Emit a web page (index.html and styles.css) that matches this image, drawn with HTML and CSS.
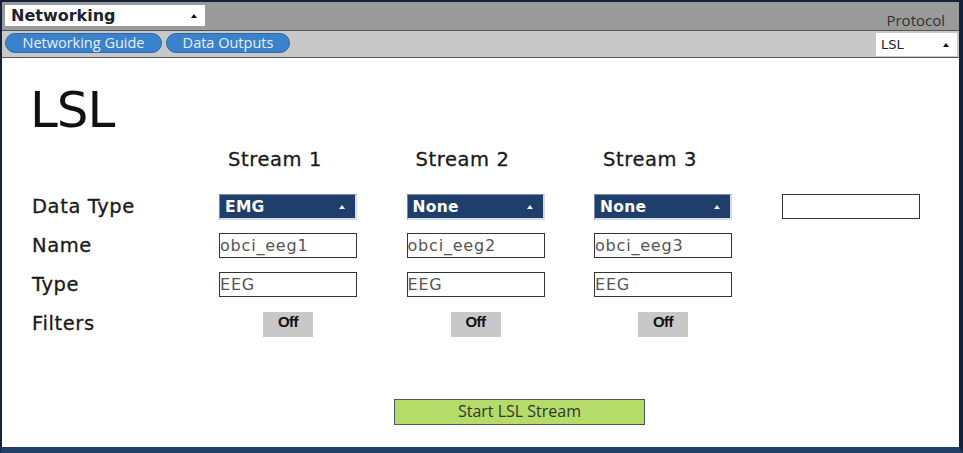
FILE: index.html
```html
<!DOCTYPE html>
<html>
<head>
<meta charset="utf-8">
<title>Networking - LSL</title>
<link rel="stylesheet" href="styles.css">
</head>
<body>
<div class="window">
	<div class="topbar">
		<div class="widget-select">
			<span>Networking</span>
			<span class="caret dark"></span>
		</div>
		<div class="protocol-label">Protocol</div>
	</div>
	<div class="tabbar">
		<div class="tabs">
			<span class="tab">Networking Guide</span>
			<span class="tab">Data Outputs</span>
		</div>
		<div class="protocol-select">
			<span>LSL</span>
			<span class="caret dark"></span>
		</div>
	</div>
	<main class="panel">
		<h1 class="title">LSL</h1>
		<div class="streams">
			<div></div>
			<div class="stream-head">Stream 1</div>
			<div class="stream-head">Stream 2</div>
			<div class="stream-head">Stream 3</div>
			<div></div>

			<div class="row-label">Data Type</div>
			<div class="dtype"><span>EMG</span><span class="caret"></span></div>
			<div class="dtype"><span>None</span><span class="caret"></span></div>
			<div class="dtype"><span>None</span><span class="caret"></span></div>
			<div class="field"></div>

			<div class="row-label">Name</div>
			<div class="field">obci_eeg1</div>
			<div class="field">obci_eeg2</div>
			<div class="field">obci_eeg3</div>
			<div></div>

			<div class="row-label">Type</div>
			<div class="field">EEG</div>
			<div class="field">EEG</div>
			<div class="field">EEG</div>
			<div></div>

			<div class="row-label">Filters</div>
			<div class="toggle-cell"><span class="toggle">Off</span></div>
			<div class="toggle-cell"><span class="toggle">Off</span></div>
			<div class="toggle-cell"><span class="toggle">Off</span></div>
			<div></div>
		</div>
		<div class="start-row">
			<span class="start-btn">Start LSL Stream</span>
		</div>
	</main>
</div>
</body>
</html>
```

FILE: styles.css
```css
html, body {
  margin: 0;
  padding: 0;
}

body {
  width: 963px;
  height: 453px;
  overflow: hidden;
  background: #1f3e68;
  font-family: "DejaVu Sans", sans-serif;
}

.window {
  height: 453px;
  box-sizing: border-box;
  display: flex;
  flex-direction: column;
  border: 2px solid #13223a;
  border-right-width: 4px;
  border-bottom: 6px solid #1f3e68;
  background: white;
}

/* || top bars */

.topbar {
  height: 28px;
  flex: none;
  background: #9a9a9a;
  display: flex;
  justify-content: space-between;
  box-sizing: border-box;
  padding: 3px 0 0 3px;
}

.widget-select {
  width: 200px;
  height: 21px;
  background: white;
  display: flex;
  align-items: center;
  justify-content: space-between;
  padding: 0 8px 0 6px;
  box-sizing: border-box;
  font-weight: bold;
  font-size: 16px;
  color: #1c2230;
}

.protocol-label {
  align-self: flex-end;
  padding: 0 14px 0 0;
  font-family: "Open Sans", sans-serif;
  font-size: 15px;
  line-height: 20px;
  color: #333;
}

.tabbar {
  height: 28px;
  flex: none;
  background: #c8c8c8;
  border-top: 1px solid #555;
  border-bottom: 1px solid #555;
  box-sizing: border-box;
  display: flex;
  justify-content: space-between;
}

.tabs {
  display: flex;
  gap: 4px;
  padding: 2px 0 0 3px;
}

.tab {
  height: 20px;
  background: #3a82cc;
  border: 1px solid #2d6aa8;
  border-radius: 10px;
  box-sizing: border-box;
  color: #e8f0fa;
  font-family: "Open Sans", sans-serif;
  font-size: 14.5px;
  line-height: 18px;
  text-align: center;
}

.tab:first-child {
  width: 157px;
}

.tab:last-child {
  width: 124px;
}

.protocol-select {
  width: 81px;
  height: 23px;
  margin: 2px 2px 0 0;
  background: white;
  display: flex;
  align-items: center;
  justify-content: space-between;
  padding: 0 8px 0 5px;
  box-sizing: border-box;
  font-size: 13px;
  color: #222;
}

.caret {
  width: 0;
  height: 0;
  border-left: 3px solid transparent;
  border-right: 3px solid transparent;
  border-bottom: 4px solid white;
}

.caret.dark {
  border-bottom-color: #111;
}

/* || panel */

.panel {
  flex: 1;
  padding: 0 0 0 30px;
  color: #111;
}

.title {
  margin: 24px 0 0 -2px;
  font-size: 50px;
  font-weight: normal;
  line-height: 56px;
  letter-spacing: -1px;
}

.streams {
  display: grid;
  grid-template-columns: 137.5px repeat(4, 138px);
  grid-template-rows: 32px repeat(4, 26px);
  column-gap: 49.5px;
  row-gap: 13px;
  margin-top: 11px;
}

.stream-head,
.row-label {
  font-size: 19.5px;
  letter-spacing: 0.6px;
  color: #1a1a1a;
  -webkit-text-stroke: 0.3px #1a1a1a;
}

.stream-head {
  padding-left: 9px;
  line-height: 22px;
}

.row-label {
  line-height: 26px;
}

.dtype {
  background: #1e3f6b;
  border: 1px solid #7a8a9e;
  border-right: 2px solid #d8dde4;
  border-bottom: 2px solid #d8dde4;
  box-sizing: border-box;
  display: flex;
  align-items: center;
  justify-content: space-between;
  padding: 0 10px 0 5px;
  color: white;
  font-weight: bold;
  font-size: 15.5px;
  letter-spacing: 0.3px;
}

.field {
  border: 1px solid #333;
  box-sizing: border-box;
  height: 25px;
  font-size: 16px;
  letter-spacing: 0.8px;
  line-height: 23px;
  color: #555;
  background: white;
}

.toggle-cell {
  display: flex;
  justify-content: center;
}

.toggle {
  width: 50px;
  height: 25px;
  margin-top: 1px;
  background: #c8c8c8;
  text-align: center;
  font-family: "Liberation Sans", sans-serif;
  font-weight: bold;
  font-size: 15px;
  line-height: 20px;
  color: #111;
  letter-spacing: -0.5px;
}

.start-row {
  margin: 62px 0 0 362px;
}

.start-btn {
  display: inline-block;
  width: 251px;
  height: 26px;
  box-sizing: border-box;
  background: #b5dc68;
  border: 1px solid #4a5566;
  text-align: center;
  font-family: "Open Sans", sans-serif;
  font-size: 16px;
  line-height: 23px;
  color: #333;
}
```
